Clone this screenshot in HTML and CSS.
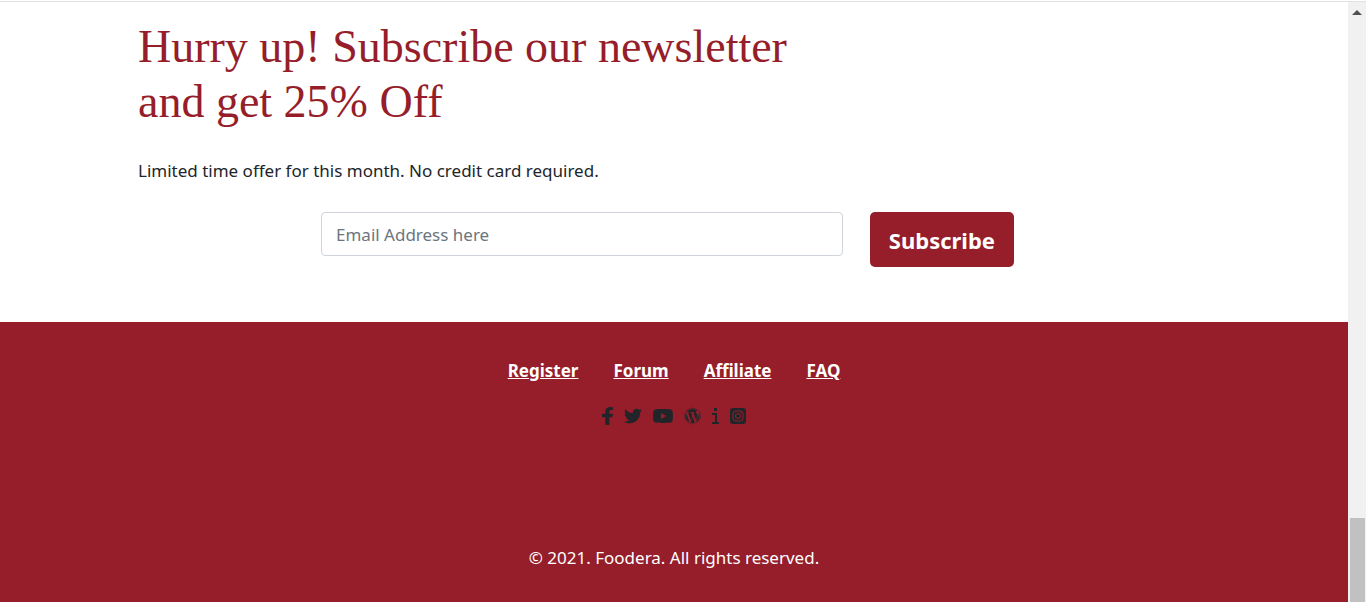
FILE: index.html
```html
<!DOCTYPE html>
<html lang="en">
<head>
<meta charset="utf-8">
<meta name="viewport" content="width=device-width, initial-scale=1">
<title>Foodera</title>
<link rel="stylesheet" href="styles.css">
</head>
<body>
<div class="page">
  <main class="newsletter">
    <h1 class="newsletter-title">Hurry up! Subscribe our newsletter and get 25% Off</h1>
    <p class="newsletter-text">Limited time offer for this month. No credit card required.</p>
    <form class="newsletter-form">
      <input class="email" type="email" placeholder="Email Address here" aria-label="Email Address">
      <button class="subscribe" type="submit">Subscribe</button>
    </form>
  </main>
  <footer class="footer">
    <nav class="links">
      <a href="#register">Register</a>
      <a href="#forum">Forum</a>
      <a href="#affiliate">Affiliate</a>
      <a href="#faq">FAQ</a>
    </nav>
    <div class="social">
      <a href="#facebook" aria-label="Facebook"><svg width="11" height="18" viewBox="22 0 272 512" preserveAspectRatio="none"><path d="M279.14 288l14.22-92.66h-88.91v-60.13c0-25.35 12.42-50.06 52.24-50.06h40.42V6.26S260.43 0 225.36 0c-73.22 0-121.08 44.38-121.08 124.72v70.62H22.89V288h81.39v224h100.17V288z"/></svg></a>
      <a href="#twitter" aria-label="Twitter"><svg width="18" height="18" viewBox="0 0 512 512"><path d="M459.37 151.716c.325 4.548.325 9.097.325 13.645 0 138.72-105.583 298.558-298.558 298.558-59.452 0-114.68-17.219-161.137-47.106 8.447.974 16.568 1.299 25.34 1.299 49.055 0 94.213-16.568 130.274-44.832-46.132-.975-84.792-31.188-98.112-72.772 6.498.974 12.995 1.624 19.818 1.624 9.421 0 18.843-1.3 27.614-3.573-48.081-9.747-84.143-51.98-84.143-102.985v-1.299c13.969 7.797 30.214 12.67 47.431 13.319-28.264-18.843-46.781-51.005-46.781-87.391 0-19.492 5.197-37.36 14.294-52.954 51.655 63.675 129.3 105.258 216.365 109.807-1.624-7.797-2.599-15.918-2.599-24.04 0-57.828 46.782-104.934 104.934-104.934 30.213 0 57.502 12.67 76.67 33.137 23.715-4.548 46.456-13.32 66.599-25.34-7.798 24.366-24.366 44.833-46.132 57.827 21.117-2.273 41.584-8.122 60.426-16.243-14.292 20.791-32.161 39.308-52.628 54.253z"/></svg></a>
      <a href="#youtube" aria-label="YouTube"><svg width="20" height="14" viewBox="14 64 548 384"><path d="M549.655 124.083c-6.281-23.65-24.787-42.276-48.284-48.597C458.781 64 288 64 288 64S117.22 64 74.629 75.486c-23.497 6.322-42.003 24.947-48.284 48.597-11.412 42.867-11.412 132.305-11.412 132.305s0 89.438 11.412 132.305c6.281 23.65 24.787 41.5 48.284 47.821C117.22 448 288 448 288 448s170.78 0 213.371-11.486c23.497-6.321 42.003-24.171 48.284-47.821 11.412-42.867 11.412-132.305 11.412-132.305s0-89.438-11.412-132.305zM232.145 337.591V175.185l142.739 81.205-142.739 81.201z"/></svg></a>
      <a href="#wordpress" aria-label="WordPress"><svg width="17" height="18" viewBox="0 0 512 512"><path d="M61.7 169.4l101.5 278C92.2 413 43.3 340.2 43.3 256c0-30.9 6.6-60.1 18.4-86.6zm337.9 75.9c0-26.3-9.4-44.5-17.5-58.7-10.8-17.5-20.9-32.4-20.9-49.9 0-19.6 14.8-37.8 35.7-37.8.9 0 1.8.1 2.8.2-37.9-34.7-88.3-55.9-143.7-55.9-74.3 0-139.7 38.1-177.8 95.9 5 .2 9.7.3 13.7.3 22.2 0 56.7-2.7 56.7-2.7 11.5-.7 12.8 16.2 1.4 17.5 0 0-11.5 1.3-24.3 2l77.5 230.4L249.8 247l-33.1-90.8c-11.5-.7-22.3-2-22.3-2-11.5-.7-10.1-18.2 1.3-17.5 0 0 35.1 2.7 56 2.7 22.2 0 56.7-2.7 56.7-2.7 11.5-.7 12.8 16.2 1.4 17.5 0 0-11.5 1.3-24.3 2l76.9 228.7 21.2-70.9c9-29.4 16-50.5 16-68.7zm-139.9 29.3l-63.8 185.5c19.1 5.6 39.2 8.7 60.1 8.7 24.8 0 48.5-4.3 70.6-12.1-.6-.9-1.1-1.9-1.5-2.9l-65.4-179.2zm183-120.7c.9 6.8 1.4 14 1.4 21.9 0 21.6-4 45.8-16.2 76.2l-65 187.9C426.2 403 468.7 334.5 468.7 256c0-37-9.4-71.8-26-102.1zM504 256c0 136.8-111.3 248-248 248C119.2 504 8 392.7 8 256 8 119.2 119.2 8 256 8c136.7 0 248 111.2 248 248zm-11.4 0c0-130.5-106.2-236.6-236.6-236.6C125.5 19.4 19.4 125.5 19.4 256S125.6 492.6 256 492.6c130.5 0 236.6-106.1 236.6-236.6z"/></svg></a>
      <a href="#about" aria-label="Information"><svg width="7" height="18" viewBox="0 0 7 18"><path d="M2 1h3v3H2zM0 6h5v9h2v2H0v-2h3V8H0z"/></svg></a>
      <a href="#instagram" aria-label="Instagram"><svg width="16" height="18" viewBox="0 0 16 18"><rect y="1" width="16" height="16" rx="3"/><rect class="line" x="3" y="4" width="10" height="10" rx="3"/><circle class="line" cx="8" cy="9" r="2.500"/><circle class="flash" cx="11" cy="6" r=".6"/></svg></a>
    </div>
    <p class="copyright">© 2021. Foodera. All rights reserved.</p>
  </footer>
</div>
<div class="scrollbar" aria-hidden="true">
  <svg class="arrow" width="10" height="5" viewBox="0 0 10 5"><path d="M5 0l5 5H0z"/></svg>
  <div class="thumb"></div>
</div>
</body>
</html>
```
FILE: styles.css
```css
* { box-sizing: border-box; }

body {
  display: flex;
  min-height: 100vh;
  margin: 0;
  padding-top: 1px;
  background: #fff;
  color: #212529;
  font-family: "Noto Sans", "Segoe UI", sans-serif;
  font-size: 17px;
  line-height: 28px;
}

.page {
  display: flex;
  flex: 1;
  flex-direction: column;
  border-top: 1px solid #dee2e6;
}

.newsletter {
  padding: 17px 10% 55px;
  padding-left: 138px;
}

.newsletter-title {
  max-width: 700px;
  margin: 0 0 28px;
  color: #951e2a;
  font-family: "Liberation Serif", serif;
  font-size: 46px;
  font-weight: 400;
  line-height: 55px;
}

.newsletter-text { margin: 0 0 27px; }

.newsletter-form {
  display: flex;
  align-items: flex-start;
  gap: 27px;
  width: 693px;
  max-width: 100%;
  margin: 0 0 0 183px;
}

.email {
  flex: 1;
  min-width: 0;
  height: 44px;
  padding: 6px 14px;
  border: 1px solid #ced4da;
  border-radius: 4px;
  font: inherit;
}

.email::placeholder { color: #6c757d; opacity: 1; }

.subscribe {
  padding: 13px 19px 11px;
  border: 0;
  border-radius: 5px;
  background: #951e2a;
  color: #fff;
  font: inherit;
  font-size: 22px;
  font-weight: 700;
  line-height: 31px;
}

.footer {
  display: flex;
  flex: 1;
  flex-direction: column;
  align-items: center;
  padding: 35px 20px 28px;
  background: #951e2a;
}

.links { display: flex; gap: 35px; }

.links a {
  color: #fff;
  font-weight: 700;
}

.social {
  display: flex;
  align-items: center;
  gap: 11px;
  margin: 22px 0 119px;
}

.social a { display: flex; }
.social svg { fill: #212529; }
.social .line { fill: none; stroke: #951e2a; }
.social .flash { fill: #951e2a; }

.copyright { margin: 0; color: #fff; }

.scrollbar {
  display: flex;
  flex-direction: column;
  align-items: center;
  justify-content: space-between;
  width: 18px;
  padding-top: 8px;
  border-top: 1px solid #dee2e6;
  background: #f1f1f1;
}

.arrow { fill: #505050; }

.thumb {
  width: 15px;
  height: 84px;
  background: #c1c1c1;
}
```
